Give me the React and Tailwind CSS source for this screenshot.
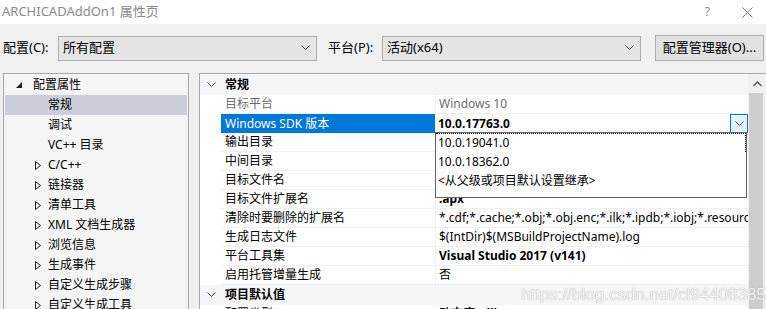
import React from "react";

const font = "font-['Noto_Sans','Noto_Sans_CJK_SC',sans-serif]";

function Chevron({ className = "" }) {
  return (
    <svg width="9" height="6" viewBox="0 0 9 6" className={className}>
      <polyline points="0.5,0.5 4.5,4.5 8.5,0.5" fill="none" stroke="#444" strokeWidth="1" />
    </svg>
  );
}

function Select({ value, width }) {
  return (
    <div
      className="h-[25px] shrink-0 flex items-center justify-between border border-[#adadad] bg-[#e5e5e5] pl-[4px] pr-[6px]"
      style={{ width }}
    >
      <span className="text-[13px] text-black">{value}</span>
      <Chevron />
    </div>
  );
}

function Collapsed() {
  return (
    <svg width="6" height="9" viewBox="0 0 6 9">
      <polygon points="0.5,0.5 5.5,4.5 0.5,8.5" fill="none" stroke="#222" strokeWidth="1" />
    </svg>
  );
}

const tree = [
  { label: "常规", selected: true },
  { label: "调试" },
  { label: "VC++ 目录" },
  { label: "C/C++", arrow: true },
  { label: "链接器", arrow: true },
  { label: "清单工具", arrow: true },
  { label: "XML 文档生成器", arrow: true },
  { label: "浏览信息", arrow: true },
  { label: "生成事件", arrow: true },
  { label: "自定义生成步骤", arrow: true },
  { label: "自定义生成工具", arrow: true },
];

function GroupRow({ label }) {
  return (
    <div className="h-[20px] flex items-center bg-[#f4f6f9] shrink-0">
      <div className="w-[22px] flex justify-center">
        <Chevron />
      </div>
      <span className="pl-[3px] text-[12px] font-bold text-black">{label}</span>
    </div>
  );
}

function PropRow({ name, value, bold, muted }) {
  return (
    <div className="h-[19px] flex shrink-0">
      <div className="w-[21px] shrink-0" />
      <div className="w-[214px] shrink-0 flex items-center border-b border-[#f0f0f0] pl-[4px]">
        <span className={`text-[12px] whitespace-nowrap ${muted ? "text-[#6d6d6d]" : "text-black"}`}>{name}</span>
      </div>
      <div className="flex-1 min-w-0 flex items-center border-b border-l border-[#f0f0f0] pl-[3px] overflow-hidden whitespace-nowrap">
        <span className={`text-[12px] ${bold ? "font-bold" : ""} ${muted ? "text-[#6d6d6d]" : "text-black"}`}>{value}</span>
      </div>
    </div>
  );
}

export default function App() {
  return (
    <div className={`relative w-[766px] h-[309px] overflow-hidden bg-[#f0f0f0] flex flex-col ${font}`}>
      {/* title bar */}
      <div className="h-[24px] bg-white flex items-center justify-between shrink-0">
        <span className="pl-[2px] text-[13px] text-[#8a8a8a]">ARCHICADAddOn1 属性页</span>
        <div className="flex items-center gap-[32px] pr-[13px] text-[#8a8a8a]">
          <span className="text-[12px]">?</span>
          <svg width="11" height="11" viewBox="0 0 11 11">
            <path d="M0.5 0.5 L10.5 10.5 M10.5 0.5 L0.5 10.5" stroke="#777" strokeWidth="1" />
          </svg>
        </div>
      </div>

      {/* toolbar */}
      <div className="h-[49px] flex items-center shrink-0 pb-[1px]">
        <span className="pl-[3px] w-[58px] shrink-0 text-[13px] text-black">配置(C):</span>
        <Select value="所有配置" width={259} />
        <span className="pl-[11px] w-[65px] shrink-0 text-[13px] text-black">平台(P):</span>
        <Select value="活动(x64)" width={259} />
        <div className="ml-[14px] w-[109px] shrink-0 h-[26px] border border-[#adadad] bg-[#e1e1e1] flex items-center justify-center">
          <span className="text-[13px] text-black whitespace-nowrap">配置管理器(O)...</span>
        </div>
      </div>

      {/* main */}
      <div className="flex-1 flex min-h-0">
        {/* tree */}
        <div className="ml-[3px] w-[186px] shrink-0 border-t border-l border-r border-[#a9a9a9] bg-[#f5f5f5] flex flex-col pt-[1px] px-[1px] overflow-hidden">
          <div className="h-[20px] flex items-center shrink-0">
            <svg width="6" height="6" viewBox="0 0 6 6" className="ml-[11px]">
              <polygon points="6,0 6,6 0,6" fill="#222" />
            </svg>
            <span className="ml-[11px] text-[12px] text-black">配置属性</span>
          </div>
          {tree.map((t) => (
            <div
              key={t.label}
              className={`h-[20px] flex items-center shrink-0 ${t.selected ? "bg-[#cccedb]" : ""}`}
            >
              <div className="w-[43px] flex justify-end pr-[7px]">{t.arrow && <Collapsed />}</div>
              <span className="text-[12px] text-black whitespace-nowrap">{t.label}</span>
            </div>
          ))}
        </div>

        {/* property grid */}
        <div className="ml-[10px] flex-1 min-w-0 border-t border-l border-[#a9a9a9] bg-white flex">
          <div className="relative flex-1 min-w-0 flex flex-col pt-[1px] overflow-hidden">
            <GroupRow label="常规" />
            <PropRow name="目标平台" value="Windows 10" muted />
            <div className="h-[19px] flex shrink-0">
              <div className="w-[21px] shrink-0" />
              <div className="w-[214px] shrink-0 flex items-center bg-[#0078d7] pl-[4px]">
                <span className="text-[12px] text-white">Windows SDK 版本</span>
              </div>
              <div className="flex-1 flex items-center justify-between pl-[3px]">
                <span className="text-[12px] font-bold text-black">10.0.17763.0</span>
                <div className="w-[18px] h-[19px] border border-[#0078d7] bg-[#e5f1fb] flex items-center justify-center">
                  <Chevron />
                </div>
              </div>
            </div>
            <PropRow name="输出目录" value="" />
            <PropRow name="中间目录" value="" />
            <PropRow name="目标文件名" value="" />
            <PropRow name="目标文件扩展名" value=".apx" bold />
            <PropRow name="清除时要删除的扩展名" value="*.cdf;*.cache;*.obj;*.obj.enc;*.ilk;*.ipdb;*.iobj;*.resources;*.tlb" />
            <PropRow name="生成日志文件" value="$(IntDir)$(MSBuildProjectName).log" />
            <PropRow name="平台工具集" value="Visual Studio 2017 (v141)" bold />
            <PropRow name="启用托管增量生成" value="否" />
            <GroupRow label="项目默认值" />
            <PropRow name="配置类型" value="动态库(.dll)" bold />

            {/* open dropdown list */}
            <div className="absolute left-[235px] top-[58px] w-[312px] h-[66px] bg-white border border-[#646464] flex flex-col">
              <div className="h-[19px] flex items-center pl-[2px] border-t border-r border-dotted border-black">
                <span className="text-[12px] text-black">10.0.19041.0</span>
              </div>
              <div className="h-[19px] flex items-center pl-[2px]">
                <span className="text-[12px] text-black">10.0.18362.0</span>
              </div>
              <div className="h-[19px] flex items-center pl-[2px]">
                <span className="text-[12px] text-black">&lt;从父级或项目默认设置继承&gt;</span>
              </div>
            </div>
          </div>

          {/* scrollbar */}
          <div className="w-[18px] shrink-0 bg-[#f0f0f0] flex flex-col">
            <div className="h-[19px] flex items-center justify-center">
              <svg width="9" height="6" viewBox="0 0 9 6">
                <polyline points="0.5,5 4.5,1 8.5,5" fill="none" stroke="#555" strokeWidth="1.5" />
              </svg>
            </div>
            <div className="flex-1 ml-[1px] mr-[3px] bg-[#cdcdcd]" />
          </div>
        </div>
      </div>

      {/* watermark */}
      <div className="absolute left-[521px] top-[285px] text-[17px] leading-[20px] font-['Liberation_Sans',sans-serif] text-[#f4f4f4] [text-shadow:0_0_1px_#9a9a9a] whitespace-nowrap">
        https://blog.csdn.net/cl944083851
      </div>
    </div>
  );
}
